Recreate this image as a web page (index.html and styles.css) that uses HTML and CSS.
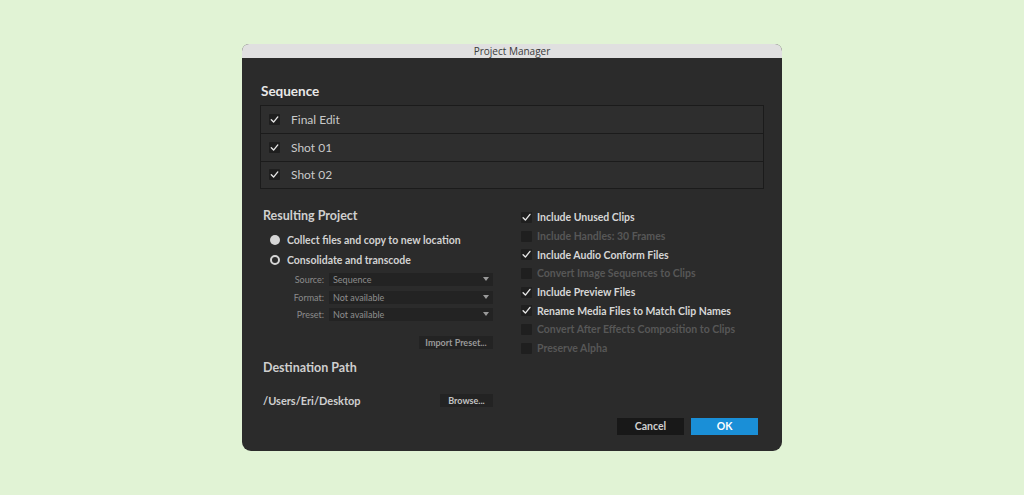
FILE: index.html
```html
<!DOCTYPE html>
<html>
<head>
<meta charset="utf-8">
<link rel="stylesheet" href="styles.css">
</head>
<body>
<div class="dialog">
  <div class="titlebar">Project Manager</div>
  <div class="body">
    <h2 class="seq-title">Sequence</h2>
    <div class="seq-table">
      <div class="seq-row"><span class="cb checked"><svg viewBox="0 0 12 12"><path d="M2.5 6.3 L5 8.8 L9.6 3.2" /></svg></span>Final Edit</div>
      <div class="seq-row"><span class="cb checked"><svg viewBox="0 0 12 12"><path d="M2.5 6.3 L5 8.8 L9.6 3.2" /></svg></span>Shot 01</div>
      <div class="seq-row"><span class="cb checked"><svg viewBox="0 0 12 12"><path d="M2.5 6.3 L5 8.8 L9.6 3.2" /></svg></span>Shot 02</div>
    </div>
    <div class="cols">
      <div class="left">
        <h3 class="sec">Resulting Project</h3>
        <div class="radio-row first"><span class="radio filled"></span>Collect files and copy to new location</div>
        <div class="radio-row"><span class="radio ring"></span>Consolidate and transcode</div>
        <div class="field first"><span class="flabel">Source:</span><span class="select">Sequence<i class="arrow"></i></span></div>
        <div class="field"><span class="flabel">Format:</span><span class="select">Not available<i class="arrow"></i></span></div>
        <div class="field"><span class="flabel">Preset:</span><span class="select">Not available<i class="arrow"></i></span></div>
        <div class="btn-line"><span class="small-btn import">Import Preset...</span></div>
        <h3 class="sec dest">Destination Path</h3>
        <div class="path-line"><span class="path">/Users/Eri/Desktop</span><span class="small-btn browse">Browse...</span></div>
      </div>
      <div class="right">
        <div class="opt on"><span class="cb2"><svg viewBox="0 0 12 12"><path d="M2.3 6.3 L4.8 8.8 L9.8 2.6" /></svg></span>Include Unused Clips</div>
        <div class="opt off"><span class="cb2"></span>Include Handles: 30 Frames</div>
        <div class="opt on"><span class="cb2"><svg viewBox="0 0 12 12"><path d="M2.3 6.3 L4.8 8.8 L9.8 2.6" /></svg></span>Include Audio Conform Files</div>
        <div class="opt off"><span class="cb2"></span>Convert Image Sequences to Clips</div>
        <div class="opt on"><span class="cb2"><svg viewBox="0 0 12 12"><path d="M2.3 6.3 L4.8 8.8 L9.8 2.6" /></svg></span>Include Preview Files</div>
        <div class="opt on"><span class="cb2"><svg viewBox="0 0 12 12"><path d="M2.3 6.3 L4.8 8.8 L9.8 2.6" /></svg></span>Rename Media Files to Match Clip Names</div>
        <div class="opt off"><span class="cb2"></span>Convert After Effects Composition to Clips</div>
        <div class="opt off"><span class="cb2"></span>Preserve Alpha</div>
      </div>
    </div>
    <div class="footer">
      <span class="btn cancel">Cancel</span>
      <span class="btn ok">OK</span>
    </div>
  </div>
</div>
</body>
</html>
```
FILE: styles.css
```css
* { box-sizing: border-box; }
html, body { margin: 0; padding: 0; }
body {
  width: 1024px;
  height: 495px;
  background: #e1f3d5;
  font-family: "Lato", "Open Sans", sans-serif;
  overflow: hidden;
}
.dialog {
  margin: 44px 0 0 242px;
  width: 540px;
  height: 407px;
  border-radius: 7px 7px 9px 9px;
  overflow: hidden;
  background: #2b2b2b;
  display: flex;
  flex-direction: column;
}
.titlebar {
  height: 14px;
  background: #e0e0e0;
  color: #3a3a3a;
  font-size: 10px;
  line-height: 14px;
  text-align: center;
  font-family: "Open Sans", sans-serif;
}
.body {
  flex: 1;
  padding: 25px 18px 0 18px;
  display: flex;
  flex-direction: column;
}
.seq-title {
  margin: 0 0 6px 1px;
  font-size: 13.5px;
  font-weight: 700;
  color: #e8e8e8;
  line-height: 16px;
}
.seq-table {
  border: 1px solid #1b1b1b;
  background: #2e2e2e;
}
.seq-row {
  height: 27.5px;
  display: flex;
  align-items: center;
  padding-left: 8px;
  font-size: 12px;
  color: #c9c9c9;
  border-top: 1px solid #1b1b1b;
}
.seq-row:first-child { border-top: none; height: 27px; }
.cb {
  width: 11px;
  height: 11px;
  background: #1e1e1e;
  border-radius: 1px;
  margin-right: 11px;
  display: inline-flex;
}
.cb svg, .cb2 svg { width: 11px; height: 11px; }
.cb path, .cb2 path {
  fill: none;
  stroke: #e6e6e6;
  stroke-width: 1.5;
  stroke-linecap: round;
  stroke-linejoin: round;
}
.cols {
  display: flex;
  margin-top: 19px;
}
.left {
  width: 233px;
  margin-left: 3px;
}
.right {
  margin-left: 25px;
  padding-top: 0;
}
.sec {
  margin: 0;
  font-size: 12.5px;
  font-weight: 700;
  color: #cfcfcf;
  line-height: 16px;
}
.radio-row {
  display: flex;
  align-items: center;
  margin-left: 7px;
  font-size: 10.5px;
  font-weight: 700;
  color: #d2d2d2;
  height: 20px;
}
.radio-row.first { margin-top: 6px; }
.radio {
  width: 10px;
  height: 10px;
  border-radius: 50%;
  margin-right: 7px;
}
.radio.filled { background: #d6d6d6; }
.radio.ring { border: 2px solid #d6d6d6; }
.field {
  display: flex;
  align-items: center;
  height: 17.5px;
  font-size: 9px;
}
.field.first { margin-top: 1px; }
.flabel {
  width: 66px;
  text-align: right;
  color: #8c8c8c;
  padding-right: 5px;
}
.select {
  position: relative;
  width: 164px;
  height: 13px;
  background: #232323;
  color: #8e8e8e;
  padding-left: 4px;
  line-height: 13px;
}
.arrow {
  position: absolute;
  right: 4px;
  top: 4px;
  width: 0;
  height: 0;
  border-left: 3.5px solid transparent;
  border-right: 3.5px solid transparent;
  border-top: 4px solid #9a9a9a;
}
.btn-line {
  display: flex;
  justify-content: flex-end;
  margin-top: 12px;
  margin-right: 3px;
}
.small-btn {
  background: #232323;
  color: #9a9a9a;
  font-size: 9px;
  height: 13px;
  line-height: 13px;
  font-weight: 700;
}
.import { width: 74px; text-align: center; }
.browse { width: 53px; text-align: center; color: #c4c4c4; }
.dest { margin-top: 11px; }
.path-line {
  display: flex;
  justify-content: space-between;
  align-items: center;
  margin-top: 18px;
  margin-right: 3px;
}
.path {
  font-size: 11px;
  font-weight: 700;
  color: #cfcfcf;
}
.opt {
  display: flex;
  align-items: center;
  height: 18.7px;
  font-size: 10.5px;
  font-weight: 700;
}
.opt.on { color: #d6d6d6; }
.opt.off { color: #575757; }
.cb2 {
  width: 11px;
  height: 11px;
  background: #1f1f1f;
  border-radius: 1px;
  margin-right: 5px;
  display: inline-flex;
}
.footer {
  display: flex;
  justify-content: flex-end;
  gap: 7px;
  margin-top: auto;
  margin-bottom: 16px;
  margin-right: 6px;
}
.btn {
  width: 67px;
  height: 17px;
  line-height: 17px;
  text-align: center;
  font-size: 10.5px;
  font-weight: 700;
}
.cancel { background: #181818; color: #d0d0d0; }
.ok { background: #1a8fd7; color: #ffffff; }
```
